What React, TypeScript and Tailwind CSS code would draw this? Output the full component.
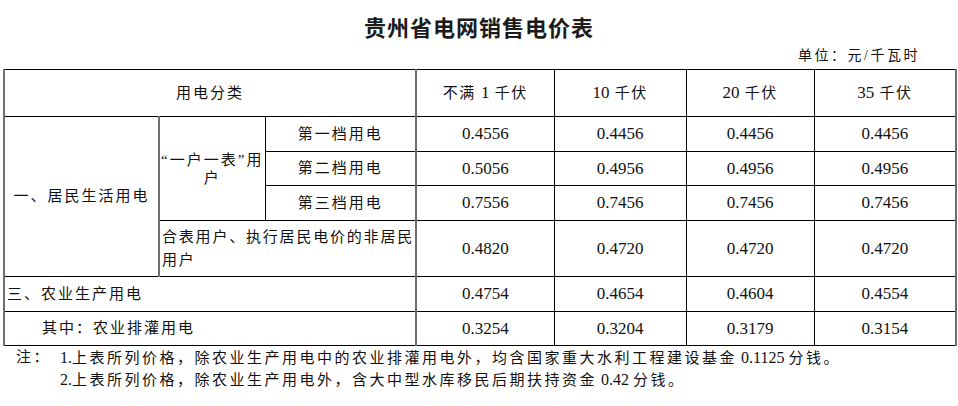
const serif = "font-['Liberation_Serif','Noto_Sans_CJK_SC',serif]";

const cjk = 'text-[15px] tracking-[2px]';
const num = 'text-[17px] text-center';
const line = 'border border-black';

const priceRows: { values: string[] }[] = [
  { values: ['0.4556', '0.4456', '0.4456', '0.4456'] },
  { values: ['0.5056', '0.4956', '0.4956', '0.4956'] },
  { values: ['0.7556', '0.7456', '0.7456', '0.7456'] },
];

function NumCells({ values }: { values: string[] }) {
  return (
    <>
      {values.map((v, i) => (
        <td
          key={i}
          className={[line, num, i === 0 ? 'border-l-2 border-l-[#6e6e6e]' : '', i === 3 ? 'border-r-2 border-r-[#6e6e6e]' : ''].join(' ')}
        >
          {v}
        </td>
      ))}
    </>
  );
}

export default function App() {
  return (
    <div className={`w-[958px] h-[406px] bg-white text-[#111] ${serif}`}>
      <div className="pt-[12px] text-center text-[22px] leading-[28px] font-bold tracking-[1px] text-[#1c1c1c] font-['Noto_Sans_CJK_SC',sans-serif]">
        贵州省电网销售电价表
      </div>
      <div className="mt-[7px] mr-[38px] text-right text-[14px] leading-[18px] tracking-[2.5px]">
        单位：元/千瓦时
      </div>

      <table className="mt-[4px] ml-[3px] w-[952px] table-fixed border-collapse">
        <colgroup>
          <col className="w-[155px]" />
          <col className="w-[106px]" />
          <col className="w-[151px]" />
          <col className="w-[138px]" />
          <col className="w-[132px]" />
          <col className="w-[128px]" />
          <col className="w-[142px]" />
        </colgroup>
        <tbody>
          <tr className="h-[47px]">
            <td colSpan={3} className={`${line} border-l-2 border-l-[#6e6e6e] text-center ${cjk}`}>
              用电分类
            </td>
            <td className={`${line} border-l-2 border-l-[#6e6e6e] text-center text-[15px] tracking-[1.5px]`}>
              不满 <span className="text-[17px] tracking-normal">1</span> 千伏
            </td>
            <td className={`${line} text-center text-[15px] tracking-[1.5px]`}>
              <span className="text-[17px] tracking-normal">10</span> 千伏
            </td>
            <td className={`${line} text-center text-[15px] tracking-[1.5px]`}>
              <span className="text-[17px] tracking-normal">20</span> 千伏
            </td>
            <td className={`${line} border-r-2 border-r-[#6e6e6e] text-center text-[15px] tracking-[1.5px]`}>
              <span className="text-[17px] tracking-normal">35</span> 千伏
            </td>
          </tr>

          {priceRows.map((row, idx) => (
            <tr key={idx} className={idx === 1 ? 'h-[34px]' : 'h-[35px]'}>
              {idx === 0 && (
                <>
                  <td rowSpan={4} className={`${line} border-l-2 border-l-[#6e6e6e] text-center ${cjk}`}>
                    一、居民生活用电
                  </td>
                  <td rowSpan={3} className={`${line} border-l-2 border-l-[#6e6e6e] px-[1px] text-center leading-[18px] whitespace-nowrap ${cjk}`}>
                    “一户一表”用<br />户
                  </td>
                </>
              )}
              <td className={`${line} text-center ${cjk}`}>
                {['第一档用电', '第二档用电', '第三档用电'][idx]}
              </td>
              <NumCells values={row.values} />
            </tr>
          ))}

          <tr className="h-[56px]">
            <td colSpan={2} className={`${line} border-l-2 border-l-[#6e6e6e] pl-[2px] text-left leading-[23px] whitespace-nowrap overflow-hidden text-[15px] tracking-[1.8px]`}>
              合表用户、执行居民电价的非居民<br />用户
            </td>
            <NumCells values={['0.4820', '0.4720', '0.4720', '0.4720']} />
          </tr>

          <tr className="h-[35px]">
            <td colSpan={3} className={`${line} border-l-2 border-l-[#6e6e6e] pl-[2px] text-left ${cjk}`}>
              三、农业生产用电
            </td>
            <NumCells values={['0.4754', '0.4654', '0.4604', '0.4554']} />
          </tr>

          <tr className="h-[34px]">
            <td colSpan={3} className={`${line} border-l-2 border-l-[#6e6e6e] pl-[37px] text-left ${cjk}`}>
              其中：农业排灌用电
            </td>
            <NumCells values={['0.3254', '0.3204', '0.3179', '0.3154']} />
          </tr>
        </tbody>
      </table>

      <div className="flex pt-[1px] pl-[16px] text-[15px] leading-[21px] tracking-[2.5px]">
        <div className="w-[44px] shrink-0">注：</div>
        <div>
          <div>
            <span className="text-[16px] tracking-normal">1.</span>上表所列价格，除农业生产用电中的农业排灌用电外，均含国家重大水利工程建设基金
            <span className="text-[16px] tracking-normal"> 0.1125 </span>分钱。
          </div>
          <div>
            <span className="text-[16px] tracking-normal">2.</span>上表所列价格，除农业生产用电外，含大中型水库移民后期扶持资金
            <span className="text-[16px] tracking-normal"> 0.42 </span>分钱。
          </div>
        </div>
      </div>
    </div>
  );
}
